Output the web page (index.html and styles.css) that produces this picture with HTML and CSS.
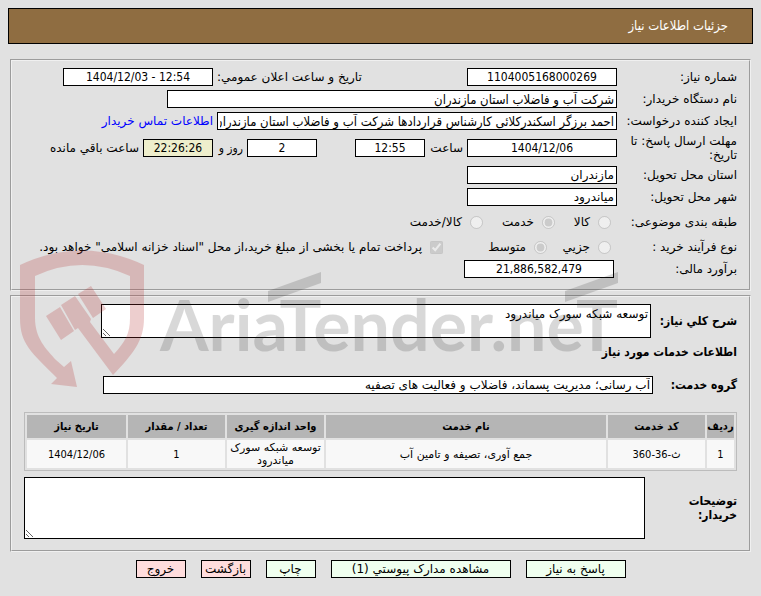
FILE: index.html
```html
<!DOCTYPE html>
<html lang="fa" dir="rtl">
<head>
  <meta charset="UTF-8">
  <meta name="viewport" content="width=device-width, initial-scale=1.0">
  <title>جزئیات اطلاعات نیاز</title>
  <link rel="stylesheet" href="styles.css">
</head>
<body>
  <header class="title-bar">
    <h1 class="title">جزئیات اطلاعات نیاز</h1>
  </header>

  <form class="need-form">
    <fieldset class="panel" aria-label="مشخصات نیاز">
      <div class="row">
        <label class="label" for="needNo">شماره نیاز:</label>
        <input class="field number" id="needNo" type="text" value="1104005168000269" readonly>
        <label class="label-announce" for="announceDate">تاریخ و ساعت اعلان عمومي:</label>
        <input class="field number" id="announceDate" type="text" dir="ltr" value="1404/12/03 - 12:54" readonly>
      </div>
      <div class="row">
        <label class="label" for="buyer">نام دستگاه خریدار:</label>
        <input class="field field-buyer" id="buyer" type="text" value="شرکت آب و فاضلاب استان مازندران" readonly>
      </div>
      <div class="row">
        <label class="label" for="creator">ایجاد کننده درخواست:</label>
        <input class="field field-creator" id="creator" type="text" value="احمد برزگر اسکندرکلائی کارشناس قراردادها شرکت آب و فاضلاب استان مازندران" readonly>
        <a class="contact-link" href="#contact">اطلاعات تماس خریدار</a>
      </div>
      <div class="row row-deadline">
        <label class="label" for="deadline">مهلت ارسال پاسخ: تا تاریخ:</label>
        <input class="field number" id="deadline" type="text" value="1404/12/06" readonly>
        <label class="label-hour" for="deadlineHour">ساعت</label>
        <input class="field field-small number" id="deadlineHour" type="text" value="12:55" readonly>
        <input class="field field-small field-days number" id="daysLeft" type="text" value="2" readonly>
        <label class="label-days" for="daysLeft">روز و</label>
        <input class="field field-small field-timer number" id="timeLeft" type="text" value="22:26:26" readonly>
        <label class="label-left" for="timeLeft">ساعت باقي مانده</label>
      </div>
      <div class="row">
        <label class="label" for="province">استان محل تحویل:</label>
        <input class="field" id="province" type="text" value="مازندران" readonly>
      </div>
      <div class="row">
        <label class="label" for="city">شهر محل تحویل:</label>
        <input class="field" id="city" type="text" value="میاندرود" readonly>
      </div>
      <div class="row row-options" role="radiogroup" aria-labelledby="subjectLabel">
        <span class="label" id="subjectLabel">طبقه بندی موضوعی:</span>
        <label class="option option-goods"><input class="tick" type="radio" name="subject" disabled><span>کالا</span></label>
        <label class="option option-service"><input class="tick" type="radio" name="subject" checked disabled><span>خدمت</span></label>
        <label class="option"><input class="tick" type="radio" name="subject" disabled><span>کالا/خدمت</span></label>
      </div>
      <div class="row" role="radiogroup" aria-labelledby="processLabel">
        <span class="label" id="processLabel">نوع فرآیند خرید :</span>
        <label class="option option-small"><input class="tick" type="radio" name="process" disabled><span>جزیي</span></label>
        <label class="option option-medium"><input class="tick" type="radio" name="process" checked disabled><span>متوسط</span></label>
        <label class="option"><input class="tick" type="checkbox" checked disabled><span>پرداخت تمام یا بخشی از مبلغ خرید،از محل "اسناد خزانه اسلامی" خواهد بود.</span></label>
      </div>
      <div class="row">
        <label class="label label-estimate" for="estimate">برآورد مالی:</label>
        <input class="field number" id="estimate" type="text" value="21,886,582,479" readonly>
      </div>
    </fieldset>

    <fieldset class="panel panel-detail" aria-label="جزئیات خدمات">
      <div class="detail-row">
        <label class="detail-label" for="summary">شرح کلي نیاز:</label>
        <textarea class="area area-summary" id="summary" readonly>توسعه شبکه سورک میاندرود</textarea>
      </div>
      <h2 class="section-title">اطلاعات خدمات مورد نیاز</h2>
      <div class="detail-row">
        <label class="detail-label label-group" for="group">گروه خدمت:</label>
        <input class="field field-group" id="group" type="text" value="آب رسانی؛ مدیریت پسماند، فاضلاب و فعالیت های تصفیه" readonly>
      </div>
      <table class="services">
        <thead>
          <tr>
            <th class="col-row">ردیف</th>
            <th class="col-code">کد خدمت</th>
            <th>نام خدمت</th>
            <th class="col-unit">واحد اندازه گیری</th>
            <th class="col-count">تعداد / مقدار</th>
            <th class="col-date">تاریخ نیاز</th>
          </tr>
        </thead>
        <tbody>
          <tr>
            <td class="number">1</td>
            <td class="number">ث-36-360</td>
            <td>جمع آوری، تصیفه و تامین آب</td>
            <td>توسعه شبکه سورک میاندرود</td>
            <td class="number">1</td>
            <td class="number">1404/12/06</td>
          </tr>
        </tbody>
      </table>
      <div class="detail-row">
        <label class="detail-label label-notes" for="notes">توضیحات خریدار:</label>
        <textarea class="area area-notes" id="notes" readonly></textarea>
      </div>
    </fieldset>

    <div class="actions">
      <button class="btn btn-answer" type="button">پاسخ به نیاز</button>
      <button class="btn btn-docs" type="button">مشاهده مدارک پیوستي (1)</button>
      <button class="btn" type="button">چاپ</button>
      <button class="btn btn-red" type="button">بازگشت</button>
      <button class="btn btn-red" type="button">خروج</button>
    </div>
  </form>

  <svg class="watermark" width="610" height="142" viewBox="18 248 610 142" direction="ltr">
    <g class="shield">
      <path d="M20 265Q82 236 144 265V318C144 341 133 354 113 375L78 328L75 330L61 305L75 296L91 319L90 322L114 354C125 342 130 334 130 318V276Q82 254 35 276V318C35 338 46 349 56 360L64 367L71 361L77 387L51 384L57 378C31 352 20 344 20 318Z"/>
      <path d="M46 316L60 307L74 331L61 340ZM78 294L91 286L106 309L93 318Z"/>
    </g>
    <g class="brand">
      <text x="160" y="351">AriaTender.neT</text>
      <path d="M268 291L321 272V283L268 302ZM565 291L618 272V283L565 302Z"/>
    </g>
  </svg>
</body>
</html>
```

FILE: styles.css
```css
* {
  box-sizing: border-box;
}
body {
  margin: 8px;
  background: #e1e1e1;
  color: #000;
  font-family: "DejaVu Sans", sans-serif;
  font-size: 12px;
  line-height: 14px;
}
input, textarea, button {
  font: inherit;
  color: inherit;
}
.title-bar {
  display: flex;
  align-items: center;
  height: 36px;
  padding: 0 24px;
  border: 1px solid #000;
  background: #8f6d41;
}
.title {
  margin: 0;
  font-family: "DejaVu Sans Condensed", "DejaVu Sans", sans-serif;
  font-size: 13px;
  font-weight: 400;
  color: #fff;
}
.need-form {
  margin-top: 15px;
}
.panel {
  min-width: 0;
  margin: 0 2px;
  padding: 5px 12px 9px;
  border: 2px groove #f0f0f0;
}

/* General information */
.row {
  display: flex;
  align-items: center;
  min-height: 22px;
  white-space: nowrap;
}
.label {
  flex: none;
  width: 120px;
  white-space: normal;
}
.label-estimate {
  width: 123px;
}
.field {
  flex: none;
  width: 150px;
  height: 18px;
  padding: 1px 2px;
  border: 1px solid #000;
  border-radius: 0;
  background: #fff;
}
.number {
  font-family: "DejaVu Sans Condensed", "DejaVu Sans", sans-serif;
  text-align: center;
}
.label-announce {
  width: 254px;
  padding-left: 4px;
  text-align: left;
}
.field-buyer,
.field-creator {
  font-family: "DejaVu Sans Condensed", "DejaVu Sans", sans-serif;
  font-size: 13px;
}
.field-buyer {
  width: 450px;
}
.field-creator {
  width: 400px;
}
.contact-link {
  margin-right: 4px;
  color: #00f;
  text-decoration: none;
}
.row-deadline {
  min-height: 32px;
}
.field-small {
  width: 70px;
}
.label-hour {
  width: 42px;
  padding-right: 4px;
}
.field-days {
  margin-right: 38px;
}
.label-days {
  width: 34px;
  padding-right: 4px;
  font-family: "DejaVu Sans Condensed", "DejaVu Sans", sans-serif;
}
.field-timer {
  background: #eeeecc;
}
.label-left {
  padding-right: 4px;
}
.row-options {
  min-height: 28px;
}
.option {
  display: flex;
  align-items: center;
  gap: 8px;
  padding-right: 6px;
}
.tick {
  flex: none;
  width: 13px;
  height: 13px;
  margin: 0;
}
.option-goods {
  width: 56px;
}
.option-service {
  width: 72px;
}
.option-small {
  width: 64px;
}
.option-medium {
  width: 104px;
}

/* Service details */
.panel-detail {
  margin-top: 4px;
  padding-top: 7px;
  padding-bottom: 11px;
}
.detail-row {
  display: flex;
  align-items: center;
}
.detail-label {
  flex: none;
  width: 86px;
  font-family: "DejaVu Sans Condensed", "DejaVu Sans", sans-serif;
  font-weight: 700;
}
.area {
  display: block;
  margin: 0;
  padding: 2px;
  border: 1px solid #000;
  border-radius: 0;
  background: #fff;
}
.area-summary {
  width: 550px;
  height: 34px;
}
.section-title {
  margin: 7px 0 17px;
  font-family: "DejaVu Sans Condensed", "DejaVu Sans", sans-serif;
  font-size: 12px;
}
.label-group {
  width: 84px;
}
.field-group {
  width: 550px;
}
.services {
  width: 100%;
  margin: 18px 0 6px;
  border: 1px solid #bcbcbc;
  border-spacing: 2px;
  table-layout: fixed;
  font-size: 11px;
  text-align: center;
}
.services th {
  height: 23px;
  padding: 0;
  background: #b5b5b5;
  font-family: "DejaVu Sans Condensed", "DejaVu Sans", sans-serif;
}
.services td {
  height: 28px;
  padding: 0;
  background: #f8f8f8;
  line-height: 13px;
}
.col-row {
  width: 27px;
}
.col-code,
.col-unit,
.col-count {
  width: 97px;
}
.col-date {
  width: 99px;
}
.label-notes {
  width: 92px;
  padding-left: 30px;
}
.area-notes {
  flex: 1;
  height: 62px;
}

/* Buttons */
.actions {
  display: flex;
  justify-content: center;
  gap: 15px;
  margin-top: 8px;
}
.btn {
  width: 50px;
  height: 18px;
  padding: 0;
  border: 1px solid #000;
  border-radius: 0;
  background: #efffef;
  line-height: 16px;
  white-space: nowrap;
}
.btn-answer {
  width: 100px;
}
.btn-docs {
  width: 180px;
}
.btn-red {
  background: #ffdddd;
}

/* Site mark printed over the form */
.watermark {
  position: absolute;
  top: 248px;
  left: 18px;
  pointer-events: none;
}
.shield {
  fill: #b63030;
  opacity: 0.23;
}
.brand {
  fill: #1e1e1e;
  opacity: 0.17;
  font-family: Lato, "Liberation Sans", sans-serif;
  font-size: 70px;
  font-weight: 700;
}
```
